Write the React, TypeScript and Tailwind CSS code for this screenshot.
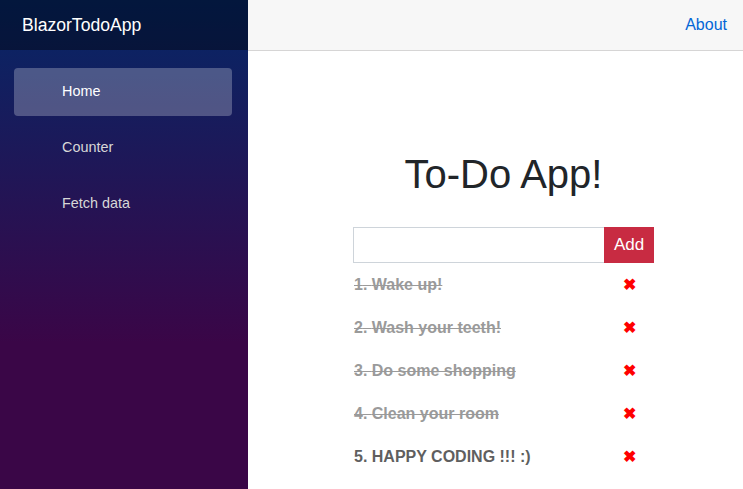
const TODOS = [
    { title: 'Wake up!', done: true },
    { title: 'Wash your teeth!', done: true },
    { title: 'Do some shopping', done: true },
    { title: 'Clean your room', done: true },
    { title: 'HAPPY CODING !!! :)', done: false },
];

const NAV = [
    { label: 'Home', active: true },
    { label: 'Counter', active: false },
    { label: 'Fetch data', active: false },
];

export default function App() {
    return (
        <div className="flex h-[489px] w-[743px] overflow-hidden bg-white font-['Liberation_Sans',Arial,sans-serif]">
            {/* Sidebar */}
            <div className="w-[248px] shrink-0 flex flex-col bg-[linear-gradient(180deg,#052767_0%,#3a0647_70%)]">
                <div className="h-[50px] flex items-center pl-[22px] bg-black/40 text-white text-[17.6px]">
                    BlazorTodoApp
                </div>
                <nav className="flex flex-col gap-2 pl-[14px] pr-4 pt-[18px]">
                    {NAV.map((n) => (
                        <div
                            key={n.label}
                            className={`h-12 flex items-center pl-12 rounded text-[14.4px] ${n.active ? 'bg-white/25 text-white' : 'text-[#d7d7d7]'}`}
                        >
                            {n.label}
                        </div>
                    ))}
                </nav>
            </div>

            {/* Main */}
            <div className="flex-1 flex flex-col">
                <div className="h-[51px] shrink-0 flex items-center justify-end pr-4 bg-[#f7f7f7] border-b border-[#d6d5d5]">
                    <span className="text-[#0366d6] text-base">About</span>
                </div>

                <div className="flex flex-col items-center pl-4 pt-[99px]">
                    <h1 className="text-[40px] leading-[48px] text-[#212529] mb-[29px]">To-Do App!</h1>

                    <div className="w-[301px]">
                        <div className="flex h-9">
                            <input className="w-[251px] h-9 border border-[#ced4da] border-r-0 outline-none" />
                            <button className="w-[50px] h-9 bg-[#c82b42] text-white text-[17px]">Add</button>
                        </div>

                        {TODOS.map((t, i) => (
                            <div key={t.title} className="flex h-[43px] items-center">
                                <span
                                    className={`w-[251px] pl-px font-bold text-base ${t.done ? 'text-[#9a9a9a] line-through' : 'text-[#5f5f5f]'}`}
                                >
                                    {i + 1}. {t.title}
                                </span>
                                <span className="w-[50px] text-center text-[#ff0000] text-[16px] font-bold">✖</span>
                            </div>
                        ))}
                    </div>
                </div>
            </div>
        </div>
    );
}
